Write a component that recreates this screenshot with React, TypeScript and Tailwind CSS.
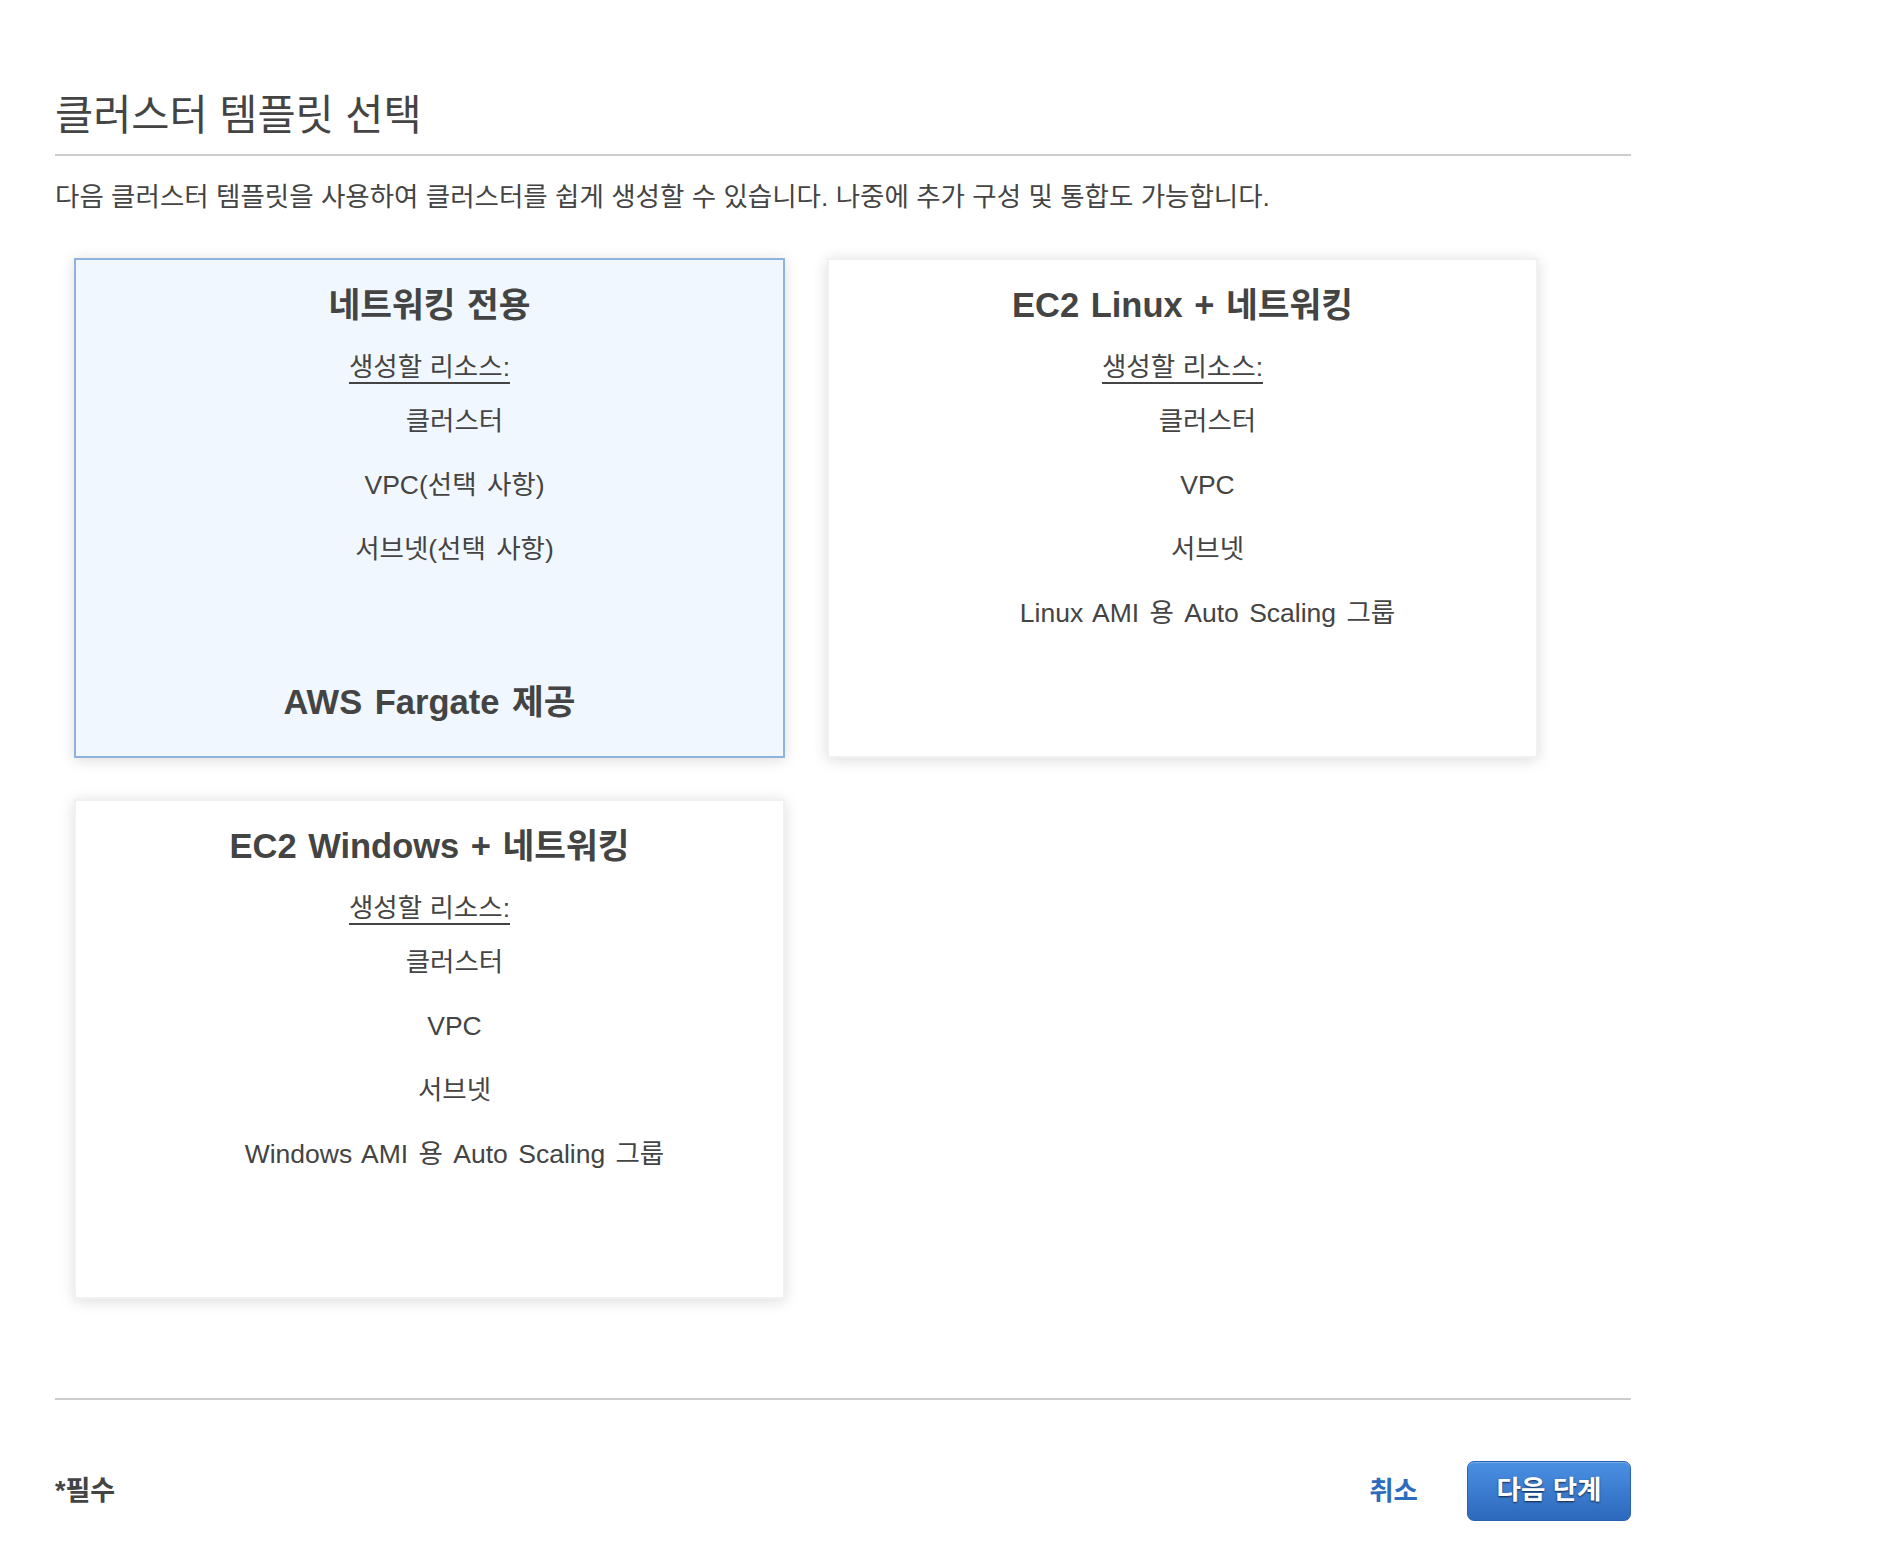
import React from "react";

type Template = {
  title: string;
  items: string[];
  note?: string;
  selected?: boolean;
};

const templates: Template[] = [
  {
    title: "네트워킹 전용",
    items: ["클러스터", "VPC(선택 사항)", "서브넷(선택 사항)"],
    note: "AWS Fargate 제공",
    selected: true,
  },
  {
    title: "EC2 Linux + 네트워킹",
    items: ["클러스터", "VPC", "서브넷", "Linux AMI 용 Auto Scaling 그룹"],
  },
  {
    title: "EC2 Windows + 네트워킹",
    items: ["클러스터", "VPC", "서브넷", "Windows AMI 용 Auto Scaling 그룹"],
  },
];

function TemplateCard({ t }: { t: Template }) {
  return (
    <div
      className={
        t.selected
          ? "flex h-[500px] cursor-pointer flex-col border-2 border-[#8fb3dd] bg-[#f1f7fe] pt-[23px] pb-[32px] text-center shadow-[0_2px_14px_rgba(0,0,0,0.14)]"
          : "flex h-[500px] cursor-pointer flex-col border-2 border-[#f1f1f1] bg-white pt-[23px] pb-[32px] text-center shadow-[0_2px_14px_rgba(0,0,0,0.14)]"
      }
    >
      <h2 className="text-[34.5px] leading-[44px] font-bold [word-spacing:2px]">{t.title}</h2>
      <div className="mt-[22px] text-[26.5px] leading-[36px]">
        <span className="underline decoration-[1.5px] underline-offset-[6px]">생성할 리소스:</span>
      </div>
      <ul className="mt-[18px] flex flex-col gap-[28px] pl-[50px] text-[26.5px] leading-[36px] [word-spacing:3px]">
        {t.items.map((item) => (
          <li key={item}>{item}</li>
        ))}
      </ul>
      {t.note && (
        <div className="mt-auto text-[34.5px] leading-[44px] font-bold [word-spacing:3px]">{t.note}</div>
      )}
    </div>
  );
}

export default function App() {
  return (
    <main className="min-h-screen bg-white font-['Liberation_Sans','Noto_Sans_CJK_KR',sans-serif] text-[#444]">
      <div className="w-[1631px] pt-[91px] pb-[41px] pl-[55px]">
        {/* Header */}
        <h1 className="border-b-2 border-[#cccccc] pb-[14px] text-[41.5px] leading-[49px] font-normal">
          클러스터 템플릿 선택
        </h1>
        <p className="mt-[24px] text-[26.5px] leading-[34px]">
          다음 클러스터 템플릿을 사용하여 클러스터를 쉽게 생성할 수 있습니다. 나중에 추가 구성 및 통합도 가능합니다.
        </p>

        {/* Template cards */}
        <div className="mt-[44px] ml-[19px] grid grid-cols-[711px_711px] gap-x-[42px] gap-y-[41px]">
          {templates.map((t) => (
            <TemplateCard key={t.title} t={t} />
          ))}
        </div>

        {/* Footer */}
        <div className="mt-[99px] border-t-2 border-[#cccccc] pt-[61px]">
          <div className="flex items-center justify-between">
            <span className="text-[27px] leading-[34px] font-bold">*필수</span>
            <div className="flex items-center gap-[49px]">
              <button className="text-[26.5px] leading-[34px] font-bold text-[#2d6cbc]">취소</button>
              <button className="h-[60px] w-[164px] rounded-[7px] border border-[#2a62b0] bg-linear-to-b from-[#4b90e3] to-[#2d69bd] text-[26.5px] font-bold text-white [text-shadow:0_1px_2px_rgba(0,0,0,0.7)] shadow-[inset_0_1px_0_rgba(255,255,255,0.25)]">
                다음 단계
              </button>
            </div>
          </div>
        </div>
      </div>
    </main>
  );
}
